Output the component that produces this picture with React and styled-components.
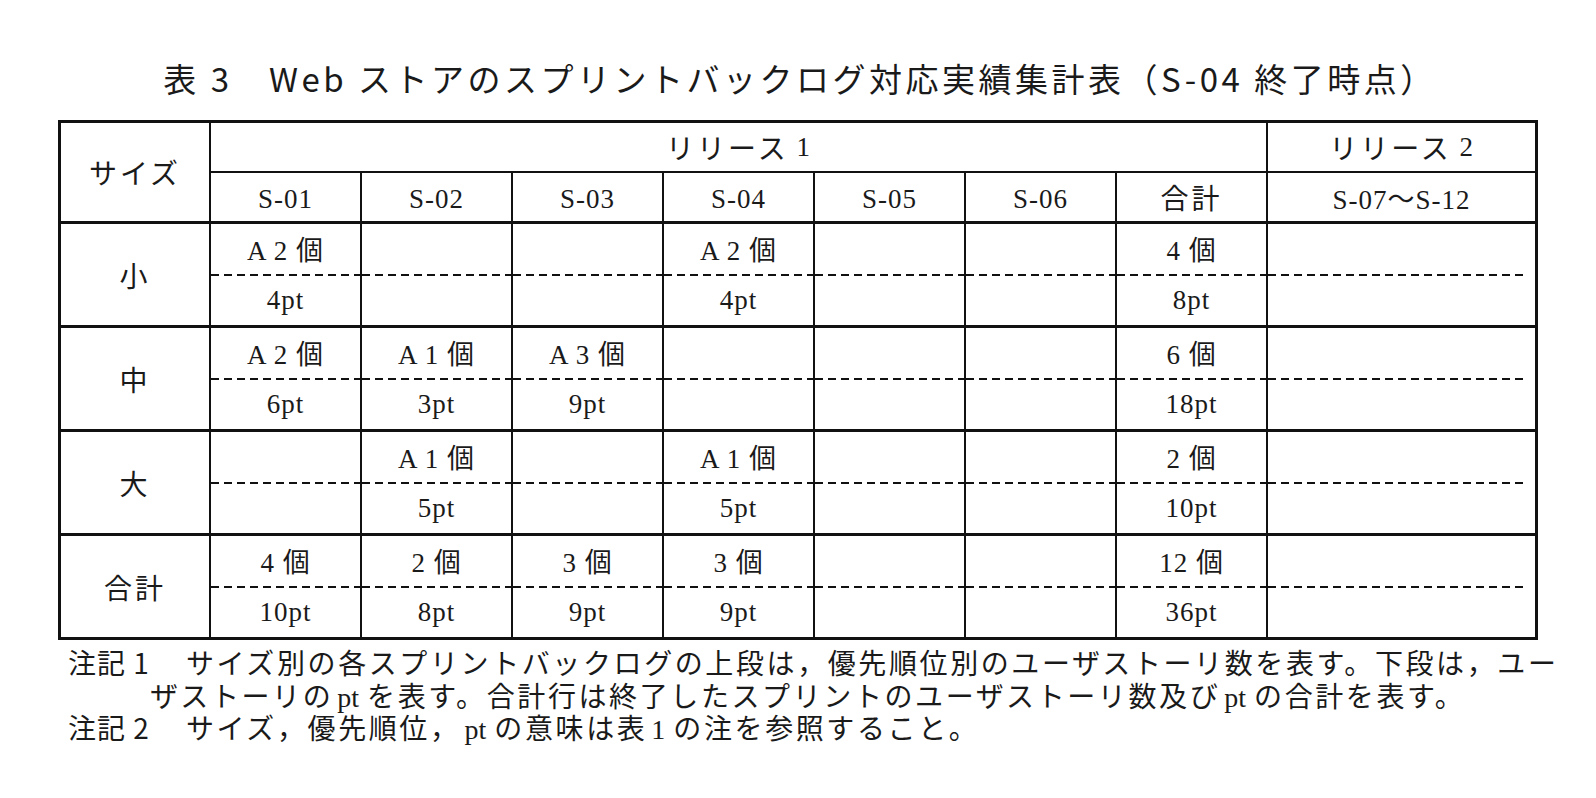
import React from 'react';
import styled, { createGlobalStyle } from 'styled-components';

const GlobalStyle = createGlobalStyle`
  html, body { margin: 0; padding: 0; background: #ffffff; }
  body {
    font-family: "Liberation Serif", "Noto Sans CJK JP", serif;
    color: #1a1a1a;
  }
`;

const Page = styled.div`
  width: 1596px;
  height: 798px;
  box-sizing: border-box;
  padding: 57px 0 0 58px;
  display: flex;
  flex-direction: column;
  overflow: hidden;
`;

const Title = styled.h1`
  margin: 0;
  width: 1480px;
  box-sizing: border-box;
  padding-left: 4px;
  text-align: center;
  font-family: "Noto Sans CJK JP", sans-serif;
  font-weight: 400;
  font-size: 33px;
  letter-spacing: 3.5px;
  line-height: 42px;
  color: #1a1a1a;
  white-space: nowrap;
`;

const Grid = styled.table`
  margin-top: 21px;
  width: 1480px;
  table-layout: fixed;
  border-collapse: separate;
  border-spacing: 0;
  border: 3px solid #111;
  font-size: 27px;
  letter-spacing: 1px;
`;

const Col = styled.col`
  width: ${p => p.$w}px;
`;

const Cell = styled.td`
  padding: 0;
  box-sizing: border-box;
  text-align: center;
  vertical-align: middle;
  border-right: ${p => (p.$last ? 'none' : '2px solid #111')};
  border-bottom: ${p => (p.$bottom ? `${p.$bottom}px solid #111` : 'none')};
  font-family: "Liberation Serif", "Noto Sans CJK JP", serif;
`;

const HeadBox = styled.div`
  height: ${p => p.$h}px;
  display: flex;
  align-items: center;
  justify-content: center;
  padding-top: ${p => p.$shift || 0}px;
  box-sizing: border-box;
  white-space: nowrap;
`;

const SizeLabel = styled.span`
  font-family: "Noto Sans CJK JP", sans-serif;
  font-size: 28px;
  letter-spacing: 3px;
`;

const Split = styled.div`
  height: 101px;
  display: flex;
  flex-direction: column;
`;

const Half = styled.div`
  flex: 1;
  display: flex;
  align-items: center;
  justify-content: center;
  white-space: nowrap;
`;

const Dash = styled.div`
  height: 2px;
  margin-right: ${p => (p.$short ? 8 : 0)}px;
  background-image: repeating-linear-gradient(
    90deg,
    #111 0 8px,
    transparent 8px 13px
  );
`;

const Notes = styled.div`
  margin: 6px 0 0 10px;
  font-family: "Liberation Serif", "Noto Sans CJK JP", serif;
  font-size: 28px;
  letter-spacing: 2.6px;
  line-height: 33px;
  color: #1a1a1a;
`;

const Note = styled.p`
  margin: 0;
  padding-left: 82px;
  text-indent: -82px;
  white-space: nowrap;
  & + & {
    margin-top: -3px;
  }
`;

const NoteLabel = styled.span`
  display: inline-block;
  width: 118px;
  text-indent: 0;
  font-family: "Noto Sans CJK JP", sans-serif;
  letter-spacing: 1px;
`;

const Latin = styled.span`
  letter-spacing: 0;
  margin: 0 8px 0 4px;
`;

const sprints = ['S-01', 'S-02', 'S-03', 'S-04', 'S-05', 'S-06'];

const rows = [
  {
    label: '小',
    cells: [['A 2 個', '4pt'], null, null, ['A 2 個', '4pt'], null, null, ['4 個', '8pt'], null],
  },
  {
    label: '中',
    cells: [['A 2 個', '6pt'], ['A 1 個', '3pt'], ['A 3 個', '9pt'], null, null, null, ['6 個', '18pt'], null],
  },
  {
    label: '大',
    cells: [null, ['A 1 個', '5pt'], null, ['A 1 個', '5pt'], null, null, ['2 個', '10pt'], null],
  },
  {
    label: '合計',
    cells: [['4 個', '10pt'], ['2 個', '8pt'], ['3 個', '9pt'], ['3 個', '9pt'], null, null, ['12 個', '36pt'], null],
  },
];

const colWidths = [150, 151, 151, 151, 151, 151, 151, 151, 267];

export default function App() {
  return (
    <>
      <GlobalStyle />
      <Page>
        <Title>表 3　Web ストアのスプリントバックログ対応実績集計表（S-04 終了時点）</Title>
        <Grid>
          <colgroup>
            {colWidths.map((w, i) => (
              <Col key={i} $w={w} />
            ))}
          </colgroup>
          <tbody>
            <tr>
              <Cell rowSpan={2} $bottom={3}>
                <SizeLabel>サイズ</SizeLabel>
              </Cell>
              <Cell colSpan={7} $bottom={2}>
                <HeadBox $h={48}>
                  <SizeLabel>リリース</SizeLabel>&nbsp;1
                </HeadBox>
              </Cell>
              <Cell $last $bottom={2}>
                <HeadBox $h={48}>
                  <SizeLabel>リリース</SizeLabel>&nbsp;2
                </HeadBox>
              </Cell>
            </tr>
            <tr>
              {sprints.map(s => (
                <Cell key={s} $bottom={3}>
                  <HeadBox $h={48} $shift={4}>{s}</HeadBox>
                </Cell>
              ))}
              <Cell $bottom={3}>
                <HeadBox $h={48}>
                  <SizeLabel>合計</SizeLabel>
                </HeadBox>
              </Cell>
              <Cell $last $bottom={3}>
                <HeadBox $h={48}>S-07～S-12</HeadBox>
              </Cell>
            </tr>
            {rows.map((row, ri) => {
              const lastRow = ri === rows.length - 1;
              return (
                <tr key={row.label}>
                  <Cell $bottom={lastRow ? 0 : 3}>
                    <SizeLabel>{row.label}</SizeLabel>
                  </Cell>
                  {row.cells.map((c, ci) => {
                    const lastCol = ci === row.cells.length - 1;
                    return (
                      <Cell key={ci} $last={lastCol} $bottom={lastRow ? 0 : 3}>
                        <Split>
                          <Half>{c ? c[0] : ''}</Half>
                          <Dash $short={lastCol} />
                          <Half>{c ? c[1] : ''}</Half>
                        </Split>
                      </Cell>
                    );
                  })}
                </tr>
              );
            })}
          </tbody>
        </Grid>
        <Notes>
          <Note>
            <NoteLabel>注記 1</NoteLabel>サイズ別の各スプリントバックログの上段は，優先順位別のユーザストーリ数を表す。下段は，ユー
            <br />
            ザストーリの<Latin>pt</Latin>を表す。合計行は終了したスプリントのユーザストーリ数及び<Latin>pt</Latin>の合計を表す。
          </Note>
          <Note>
            <NoteLabel>注記 2</NoteLabel>サイズ，優先順位，<Latin>pt</Latin>の意味は表<Latin>1</Latin>の注を参照すること。
          </Note>
        </Notes>
      </Page>
    </>
  );
}
